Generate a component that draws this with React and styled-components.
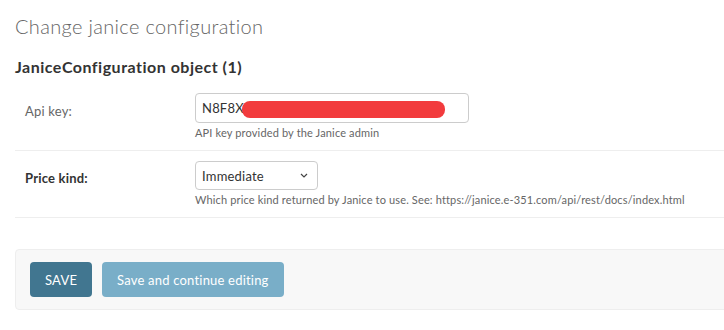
import React from "react";
import styled, { createGlobalStyle } from "styled-components";

const GlobalStyle = createGlobalStyle`
  html, body {
    margin: 0;
    padding: 0;
    background: #fff;
    overflow: hidden;
  }
  body {
    font-family: Lato, "Noto Sans", sans-serif;
    color: #333;
    font-size: 14px;
  }
  * { box-sizing: border-box; }
`;

function App() {
  return (
    <>
      <GlobalStyle />
      <Content>
        <Title>Change janice configuration</Title>
        <SubTitle>JaniceConfiguration object (1)</SubTitle>
        <Fieldset>
          <FormRow>
            <Label>Api key:</Label>
            <Field>
              <InputWrap>
                <TextInput type="text" defaultValue="N8F8X" readOnly />
                <Redaction />
              </InputWrap>
              <Help>API key provided by the Janice admin</Help>
            </Field>
          </FormRow>
          <FormRow>
            <Label required>Price kind:</Label>
            <Field>
              <SelectWrap>
                <Select defaultValue="immediate">
                  <option value="immediate">Immediate</option>
                  <option value="buy">Buy</option>
                  <option value="sell">Sell</option>
                </Select>
                <Chevron width="8" height="5" viewBox="0 0 8 5">
                  <path d="M1 1l3 3 3-3" fill="none" stroke="#444" strokeWidth="1.2" />
                </Chevron>
              </SelectWrap>
              <Help>
                Which price kind returned by Janice to use. See:
                https://janice.e-351.com/api/rest/docs/index.html
              </Help>
            </Field>
          </FormRow>
        </Fieldset>
        <SubmitRow>
          <Button primary>SAVE</Button>
          <Button>Save and continue editing</Button>
        </SubmitRow>
      </Content>
    </>
  );
}

export default App;

const Content = styled.div`
  padding: 12px 0 0 15px;
  width: 760px;
`;

const Title = styled.h1`
  margin: 0 0 16px;
  font-size: 20px;
  font-weight: 300;
  color: #666;
  line-height: 28px;
  letter-spacing: 0.33px;
`;

const SubTitle = styled.h2`
  margin: 0 0 5px;
  font-size: 16px;
  font-weight: 700;
  color: #333;
  line-height: 22px;
  letter-spacing: 0.5px;
`;

const Fieldset = styled.div`
  margin-bottom: 31px;
`;

const FormRow = styled.div`
  display: flex;
  padding: 10px;
  border-bottom: 1px solid #eee;
  font-size: 13px;
`;

const Label = styled.label`
  width: 170px;
  padding-top: ${(p) => (p.required ? "9px" : "10px")};
  color: ${(p) => (p.required ? "#333" : "#666")};
  font-weight: ${(p) => (p.required ? 700 : 400)};
  line-height: 16px;
  letter-spacing: 0.2px;
`;

const Field = styled.div`
  display: flex;
  flex-direction: column;
`;

const InputWrap = styled.div`
  position: relative;
  width: 274px;
`;

const TextInput = styled.input`
  width: 274px;
  height: 30px;
  padding: 5px 6px;
  border: 1px solid #ccc;
  border-radius: 4px;
  font-family: inherit;
  font-size: 13px;
  color: #333;
  letter-spacing: 0.2px;
  outline: none;
`;

const Redaction = styled.div`
  position: absolute;
  left: 47px;
  top: 8px;
  width: 203px;
  height: 17px;
  border-radius: 8px;
  background: #f23b3d;
`;

const SelectWrap = styled.div`
  position: relative;
  width: 123px;
`;

const Select = styled.select`
  appearance: none;
  width: 123px;
  height: 29px;
  padding: 4px 6px;
  border: 1px solid #ccc;
  border-radius: 4px;
  background: #fff;
  font-family: inherit;
  font-size: 13px;
  color: #333;
  letter-spacing: 0.2px;
  outline: none;
`;

const Chevron = styled.svg`
  position: absolute;
  right: 10px;
  top: 12px;
  pointer-events: none;
`;

const Help = styled.div`
  margin-top: 3px;
  font-size: 11px;
  line-height: 14px;
  color: #666;
  letter-spacing: 0.15px;
`;

const SubmitRow = styled.div`
  display: flex;
  gap: 10px;
  padding: 12px 14px;
  background: #f8f8f8;
  border: 1px solid #eee;
  border-radius: 4px;
`;

const Button = styled.button`
  height: 35px;
  padding: 0 15px;
  border: none;
  border-radius: 4px;
  background: ${(p) => (p.primary ? "#417690" : "#79aec8")};
  color: #fff;
  font-family: inherit;
  font-size: 13px;
  letter-spacing: 0.2px;
  cursor: pointer;
`;
